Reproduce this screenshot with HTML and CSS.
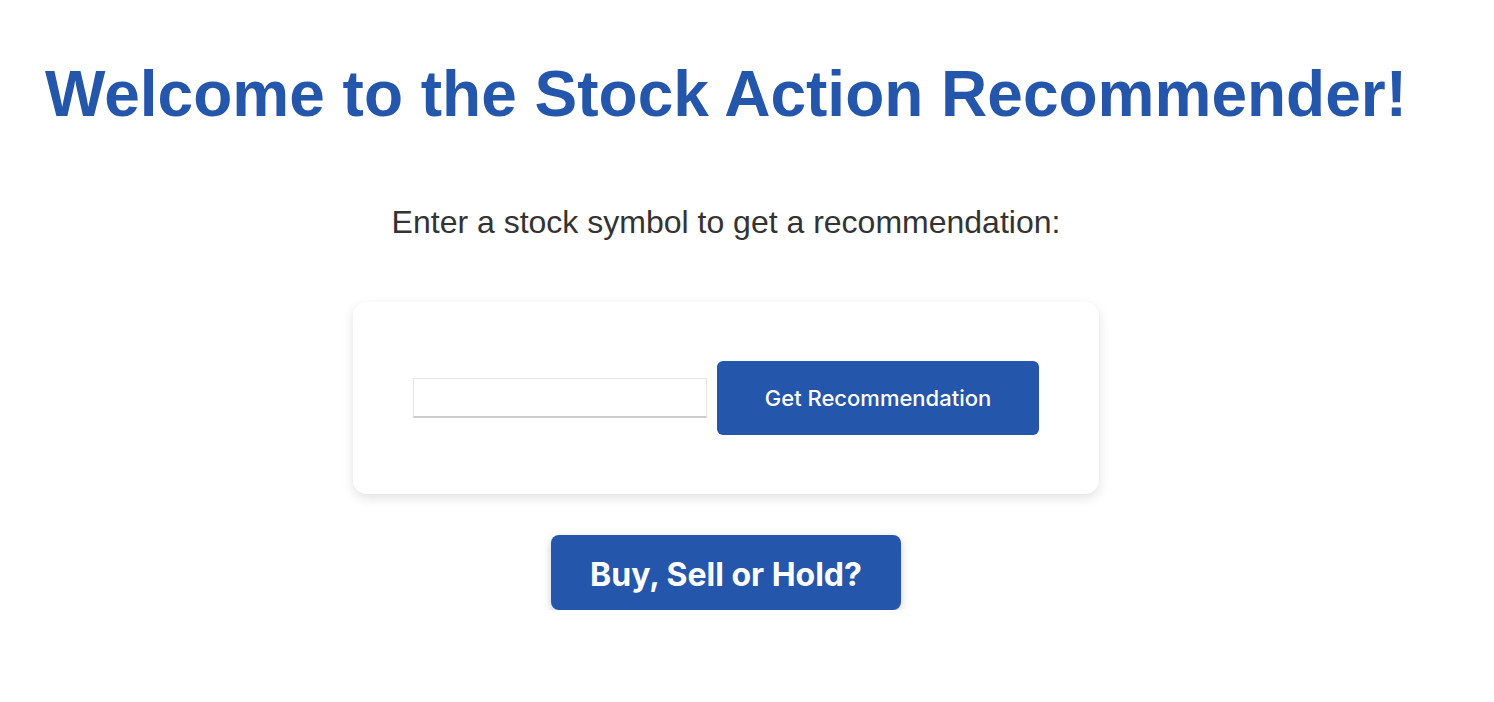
FILE: index.html
```html
<!DOCTYPE html>
<html>
<head>
<meta charset="utf-8">
<link rel="stylesheet" href="styles.css">
</head>
<body>
<main class="page">
  <h1 class="title">Welcome to the Stock Action Recommender!</h1>
  <p class="subtitle">Enter a stock symbol to get a recommendation:</p>
  <div class="card">
    <input class="symbol-input" type="text">
    <button class="btn-get">Get Recommendation</button>
  </div>
  <button class="btn-action">Buy, Sell or Hold?</button>
</main>
</body>
</html>
```

FILE: styles.css
```css
html, body {
  margin: 0;
  padding: 0;
  background: #ffffff;
}
.page {
  width: 1452px;
  display: flex;
  flex-direction: column;
  align-items: center;
  font-family: "Liberation Sans", Arial, sans-serif;
}
.title {
  margin: 54px 0 0;
  font-size: 64px;
  font-weight: 700;
  line-height: 80px;
  color: #2456ac;
}
.subtitle {
  margin: 68px 0 0;
  font-size: 32px;
  line-height: 40px;
  color: #333333;
}
.card {
  margin-top: 60px;
  width: 746px;
  box-sizing: border-box;
  padding: 59px 60px;
  background: #ffffff;
  border-radius: 14px;
  box-shadow: 0 4px 12px rgba(0, 0, 0, 0.12);
  display: flex;
  align-items: center;
  gap: 10px;
}
.symbol-input {
  width: 294px;
  height: 40px;
  box-sizing: border-box;
  border: 1px solid #e6e6e6;
  border-bottom: 2px solid #cccccc;
  padding: 0 8px;
  font-size: 16px;
  outline: none;
}
.btn-get {
  width: 322px;
  height: 74px;
  border: none;
  border-radius: 6px;
  background: #2456ac;
  color: #ffffff;
  font-family: Inter, "Noto Sans", sans-serif;
  font-size: 22px;
  font-weight: 500;
}
.btn-action {
  margin-top: 41px;
  width: 350px;
  height: 75px;
  padding: 4px 0 0;
  border: none;
  border-radius: 8px;
  background: #2456ac;
  color: #ffffff;
  font-family: Inter, "Noto Sans", sans-serif;
  font-size: 32px;
  font-weight: 700;
  box-shadow: 0 3px 8px rgba(0, 0, 0, 0.2);
}
```
